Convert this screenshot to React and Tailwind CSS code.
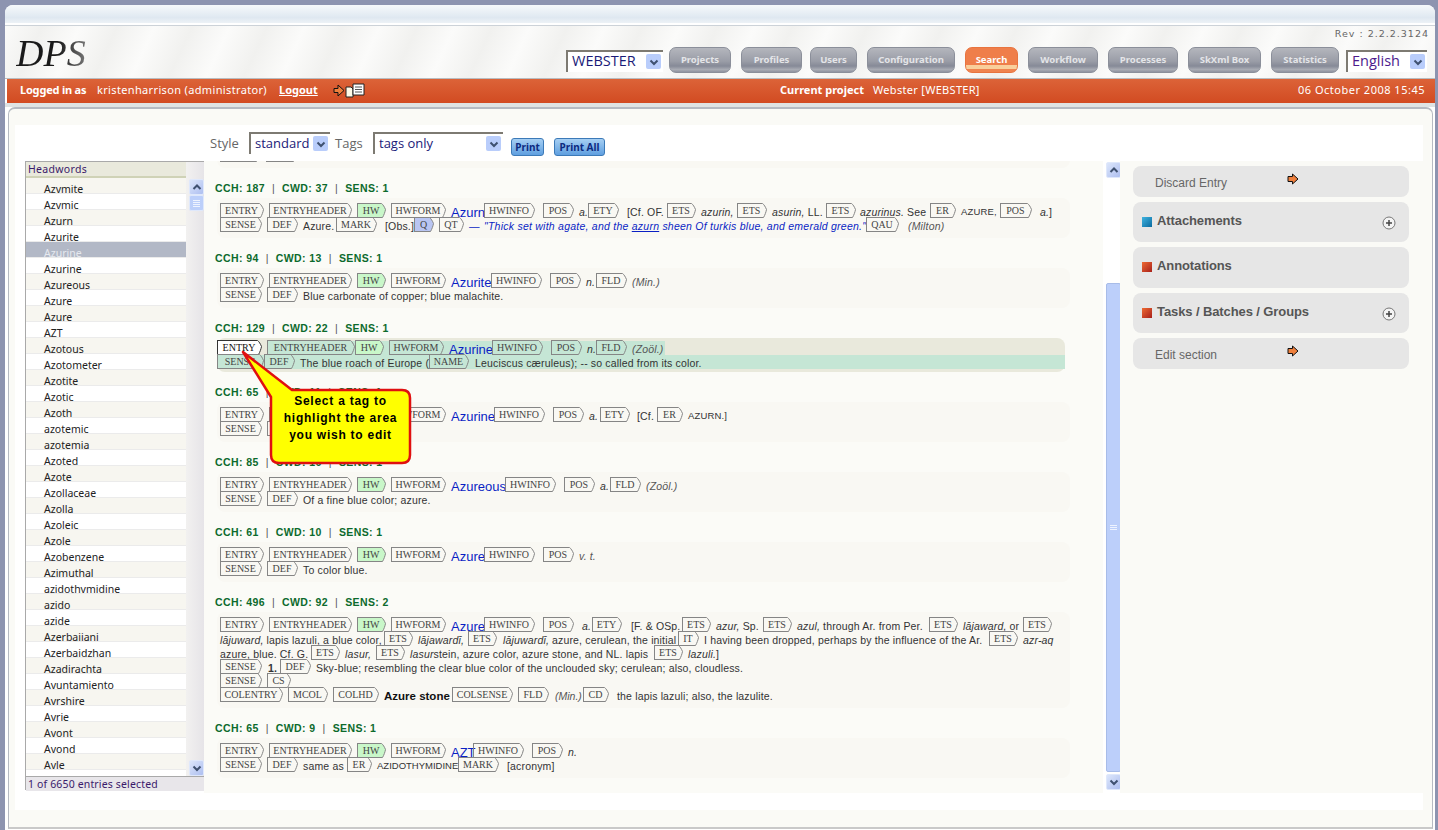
import React from "react";

const W = {
  ENTRY: "w-[44px]", ENTRYHEADER: "w-[83px]", HW: "w-[29px]", HWFORM: "w-[55px]", HWINFO: "w-[51px]", POS: "w-[31px]", ETY: "w-[31px]",
  SENSE: "w-[42px]", DEF: "w-[31px]", MARK: "w-[41px]", Q: "w-[20px]", QT: "w-[25px]", FLD: "w-[31px]", ETS: "w-[29px]", ER: "w-[26px]",
  QAU: "w-[33px]", IT: "w-[21px]", CS: "w-[24px]", COLENTRY: "w-[63px]", MCOL: "w-[40px]", COLHD: "w-[46px]", COLSENSE: "w-[61px]", CD: "w-[26px]", NAME: "w-[40px]",
};

function T({ n, c = "", w, bg = "", fill = "none", line = "#858585", text = "text-[#444]", bc = "border-[#858585]" }) {
  return (
    <span className={`-mt-[1px] flex h-[15px] flex-none ${w || W[n]} ${c}`}>
      <span className={`flex min-w-0 flex-1 items-center justify-center overflow-visible whitespace-nowrap border-y border-l pl-[4px] font-['Liberation_Serif',serif] text-[10px] leading-[12px] ${bc} ${bg} ${text}`}>{n}</span>
      <svg width="6" height="15" viewBox="0 0 6 15" className="flex-none">
        <path d="M0 .5H1.5C3 1.5 4.5 4 5.5 6.5 5 9 4 12 2.5 14.5H0Z" fill={fill} />
        <path d="M0 .5H1.5C3 1.5 4.5 4 5.5 6.5 5 9 4 12 2.5 14.5H0" fill="none" stroke={line} strokeWidth="1" />
      </svg>
    </span>
  );
}

function X({ c = "", children }) {
  return <span className={`mt-[1px] block h-[14px] flex-none whitespace-nowrap font-['Liberation_Sans',sans-serif] text-[10.5px] leading-[14px] tracking-[0.16px] text-[#333] ${c}`}>{children}</span>;
}

function HWord({ c, children }) {
  return <X c={`!mt-[2px] !text-[13px] !tracking-normal !text-[#0a1fc4] ${c}`}>{children}</X>;
}

function Row({ c = "", children }) {
  return <div className={`flex h-[14px] pl-[3px] ${c}`}>{children}</div>;
}

function Head() {
  return (
    <>
      <T n="ENTRY" />
      <T n="ENTRYHEADER" c="ml-[5px]" />
      <T n="HW" c="ml-[5px]" bg="bg-[#c9f7c9]" fill="#c9f7c9" />
      <T n="HWFORM" c="ml-[5px]" />
    </>
  );
}

function SenseDef() {
  return (
    <>
      <T n="SENSE" />
      <T n="DEF" c="ml-[5px]" />
    </>
  );
}

function Label({ a, b, s }) {
  return (
    <div className="ml-[11px] flex h-[17px] gap-[7px] font-['Liberation_Sans',sans-serif] text-[10.5px] font-bold leading-[14px] tracking-[0.4px] text-[#0c6a2c]">
      <span>CCH: {a}</span>
      <span className="font-normal text-[#555]">|</span>
      <span>CWD: {b}</span>
      <span className="font-normal text-[#555]">|</span>
      <span>SENS: {s}</span>
    </div>
  );
}

function Block({ c = "", children }) {
  return <div className={`mb-[13px] ml-[13px] w-[853px] flex-none rounded-lg bg-[#f9f8f3] py-[6px] ${c}`}>{children}</div>;
}

const WORDS = ["Azymite", "Azymic", "Azurn", "Azurite", "Azurine", "Azurine", "Azureous", "Azure", "Azure", "AZT", "Azotous", "Azotometer", "Azotite", "Azotic", "Azoth", "azotemic", "azotemia", "Azoted", "Azote", "Azollaceae", "Azolla", "Azoleic", "Azole", "Azobenzene", "Azimuthal", "azidothymidine", "azido", "azide", "Azerbaijani", "Azerbaidzhan", "Azadirachta", "Ayuntamiento", "Ayrshire", "Ayrie", "Ayont", "Ayond", "Ayle"];

const NAV = [
  ["Projects", "w-[62px] ml-[6px]"],
  ["Profiles", "w-[61px] ml-[10px]"],
  ["Users", "w-[47px] ml-[8px]"],
  ["Configuration", "w-[88px] ml-[10px]"],
  ["Search", "w-[53px] ml-[10px]", true],
  ["Workflow", "w-[70px] ml-[10px]"],
  ["Processes", "w-[70px] ml-[10px]"],
  ["SkXml Box", "w-[73px] ml-[10px]"],
  ["Statistics", "w-[68px] ml-[10px]"],
];

function Chevron({ up, size = 10 }) {
  return (
    <svg width={size} height={size} viewBox="0 0 10 10">
      <path d={up ? "M1.5 7 5 3.5 8.5 7" : "M1.5 3.5 5 7 8.5 3.5"} fill="none" stroke="#3f5170" strokeWidth="2" />
    </svg>
  );
}

function ScrollBtn({ up, c = "" }) {
  return (
    <div className={`flex h-[16px] w-[15px] flex-none items-center justify-center rounded-[2px] border border-[#dfe8fb] bg-[linear-gradient(135deg,#dce6fb,#aebff0)] ${c}`}>
      <Chevron up={up} />
    </div>
  );
}

function Sel({ label, c, txt = "", arrow = "ml-auto" }) {
  return (
    <div className={`flex flex-none items-center border-l-2 border-t-2 border-[#7d7a72] bg-white pb-[1px] pl-[4px] pr-[2px] font-['Open_Sans',sans-serif] text-[14.5px] leading-none text-[#1a1a78] ${c}`}>
      <span className={txt}>{label}</span>
      <span className={`flex h-[15px] w-[15px] flex-none items-center justify-center rounded-[2px] bg-[#b9cdfb] ${arrow}`}>
        <Chevron />
      </span>
    </div>
  );
}

function Arrow({ c = "" }) {
  return (
    <svg width="12" height="12" viewBox="0 0 12 12" className={c}>
      <path d="M1 3.5H5.5V1L11 6 5.5 11V8.5H1Z" fill="#ee7f3c" stroke="#111" strokeWidth="1" />
    </svg>
  );
}

function Square({ blue }) {
  return <span className={`block h-[10px] w-[10px] flex-none ${blue ? "bg-[linear-gradient(135deg,#3fb3e0,#0a6a9f)]" : "bg-[linear-gradient(135deg,#ee6a33,#a8201a)]"}`} />;
}

function Plus() {
  return (
    <svg width="14" height="14" viewBox="0 0 14 14">
      <circle cx="7" cy="7" r="6" fill="#f4f4f4" stroke="#777" />
      <path d="M7 4v6M4 7h6" stroke="#444" strokeWidth="1.5" />
    </svg>
  );
}

function PanelLink({ label, c = "" }) {
  return (
    <div className={`flex h-[31px] flex-none items-center rounded-lg bg-[#e6e6e6] pl-[22px] font-['Liberation_Sans',sans-serif] text-[12px] text-[#666] ${c}`}>
      <span className="w-[132px] pt-[3px]">{label}</span>
      <Arrow c="mb-[5px]" />
    </div>
  );
}

function PanelHead({ label, blue, plus, c = "" }) {
  return (
    <div className={`flex h-[40px] flex-none items-start rounded-lg bg-[#e6e6e6] pl-[9px] pr-[13px] pt-[11px] ${c}`}>
      <span className="mt-[4px] block flex-none"><Square blue={blue} /></span>
      <span className="ml-[5px] font-['Liberation_Sans',sans-serif] text-[13px] font-bold leading-[16px] tracking-[-0.1px] text-[#555]">{label}</span>
      {plus && <span className="ml-auto mt-[3px] block flex-none"><Plus /></span>}
    </div>
  );
}

export default function App() {
  return (
    <div className="relative h-[830px] w-[1438px] overflow-hidden bg-[#8d94b0] pl-[5px] pt-[5px]">
      <div className="h-[825px] w-[1430px] overflow-hidden rounded-t-lg bg-white">
        <div className="h-[18px] bg-[linear-gradient(#f6f9fb,#dfe8f1_70%,#edf2f6)]" />
        <div className="h-[3px] border-b border-[#ccd2d8]" />
        {/* header */}
        <div className="flex h-[53px] bg-[repeating-linear-gradient(115deg,#fbfbfa_0px,#f1f1ef_34px,#fbfbfa_68px)]">
          <div className="relative flex h-full w-full items-start border-b border-[#b9bcc0]">
            <div className="ml-[11px] mt-[9px] flex h-[36px] w-[550px] flex-none items-center">
              <span className="bg-[linear-gradient(90deg,#1a1a1a_60%,#777)] bg-clip-text font-['Liberation_Serif',serif] text-[38px] italic leading-none text-transparent">DPS</span>
            </div>
            <div className="mt-[24px] flex h-[22px] flex-none">
              <Sel label="WEBSTER" c="w-[97px] h-[22px]" />
            </div>
            <div className="mt-[21px] flex flex-none">
              {NAV.map(([n, c, on]) => (
                <div key={n} className={`flex h-[26px] flex-none items-center justify-center rounded-[7px] border font-['Noto_Sans',sans-serif] text-[9.5px] font-bold ${c} ${on ? "border-[#e8743f] bg-[linear-gradient(#ef7e4a_0%,#ef7e4a_72%,#f9cf9b_72%,#f9cf9b_88%,#ef8450_88%)] text-white" : "border-[#8b8f9a] bg-[linear-gradient(#b4b6bd,#9a9da7_55%,#868a97_75%,#a9acb4_90%,#8f93a0)] text-[#e4e5e8]"}`}>{n}</div>
              ))}
            </div>
            <div className="ml-[7px] mt-[24px] flex-none">
              <Sel label="English" c="w-[81px] h-[22px] !text-[#4c1a8c]" />
            </div>
            <div className="absolute right-[6px] top-[2px] font-['DejaVu_Sans',sans-serif] text-[9.5px] leading-[12px] tracking-[1px] text-[#666]">Rev : 2.2.2.3124</div>
          </div>
        </div>
        {/* orange bar */}
        <div className="ml-[2px] flex h-[24px] items-center bg-[linear-gradient(#dc6338,#d24b22)] pb-[1px] pr-[10px] font-['Noto_Sans',sans-serif] text-[11px] text-white">
          <span className="ml-[13px] w-[77px] flex-none font-bold tracking-[-0.2px]">Logged in as</span>
          <span className="w-[182px] flex-none tracking-[0.35px]">kristenharrison (administrator)</span>
          <span className="w-[54px] flex-none font-bold underline">Logout</span>
          <svg width="34" height="16" viewBox="0 0 34 16" className="flex-none">
            <path d="M1 5.5H5V2L11 7.5 5 13V9.5H1Z" fill="#ee7f3c" stroke="#111" />
            <path d="M13 4h5l2 2v8h-7Z" fill="#fffbe8" stroke="#222" />
            <path d="M20 1h11v11H20Z" fill="#fff" stroke="#222" />
            <path d="M22 4h7M22 6.5h7M22 9h7" stroke="#555" />
          </svg>
          <span className="ml-[413px] w-[93px] flex-none font-bold">Current project</span>
          <span className="flex-1 tracking-[0.3px]">Webster [WEBSTER]</span>
          <span className="flex-none tracking-[0.5px]">06 October 2008 15:45</span>
        </div>
        <div className="h-[4px] bg-[#dfe3e4]" />
        {/* content panel */}
        <div className="ml-[3px] h-[722px] w-[1425px] overflow-hidden rounded-t-[7px] border-x border-b-2 border-t-2 border-[#b6bac2] border-b-[#c9c9c9] bg-[#fafaf6] px-[6px] pt-[16px]">
          <div className="h-[685px] w-[1408px] bg-white">
            {/* toolbar */}
            <div className="flex h-[36px] pl-[195px] pt-[7px] font-['Open_Sans',sans-serif] text-[13px] text-[#666]">
              <span className="w-[39px] flex-none pt-[2px]">Style</span>
              <Sel label="standard" c="w-[81px] h-[22px] !text-[13px]" />
              <span className="ml-[5px] w-[38px] flex-none pt-[2px]">Tags</span>
              <Sel label="tags only" c="w-[130px] h-[22px] !text-[13px]" />
              <span className="ml-[8px] mt-[6px] flex h-[18px] w-[33px] flex-none items-center justify-center rounded-[3px] border border-[#3c7ab8] bg-[linear-gradient(#a6cff3,#5f9fe0)] font-['Noto_Sans',sans-serif] text-[10px] font-bold text-[#0d2a80]">Print</span>
              <span className="ml-[10px] mt-[6px] flex h-[18px] w-[51px] flex-none items-center justify-center rounded-[3px] border border-[#3c7ab8] bg-[linear-gradient(#a6cff3,#5f9fe0)] font-['Noto_Sans',sans-serif] text-[10px] font-bold text-[#0d2a80]">Print All</span>
            </div>
            <div className="flex h-[632px]">
              {/* Headwords list */}
              <div className="ml-[10px] flex h-[629px] w-[179px] flex-none flex-col border-l border-t border-[#a9a9a9] font-['Noto_Sans',sans-serif] text-[10.5px] text-[#222]">
                <div className="flex h-[614px] flex-none">
                  <div className="w-[160px] flex-none">
                    <div className="h-[16px] border-b-2 border-[#cfd2b6] bg-[#e9e9dc] pl-[2px] text-[10.5px] leading-[15px] tracking-[0.3px] text-[#3a1a6a]">Headwords</div>
                    {WORDS.map((w, i) => (
                      <div key={i} className={`h-[16px] overflow-hidden border-b border-[#ebebeb] pl-[18px] pt-[3px] leading-[16px] ${i === 4 ? "bg-[#b2b8c6] text-[#e6e9ef]" : i % 2 ? "bg-white" : "bg-[#f7f6f0]"}`}>{w}</div>
                    ))}
                  </div>
                  <div className="flex w-[18px] flex-none flex-col bg-[linear-gradient(90deg,#f2f1f0,#e6e4e8)] pl-[3px] pt-[17px]">
                    <ScrollBtn up />
                    <div className="flex h-[16px] w-[15px] flex-none flex-col items-center justify-center gap-[1px] rounded-[2px] border border-[#dfe8fb] bg-[#bccffa]">
                      <span className="h-px w-[7px] bg-[#eef3ff]" />
                      <span className="h-px w-[7px] bg-[#eef3ff]" />
                      <span className="h-px w-[7px] bg-[#eef3ff]" />
                      <span className="h-px w-[7px] bg-[#eef3ff]" />
                    </div>
                    <div className="flex-1" />
                    <ScrollBtn />
                  </div>
                </div>
                <div className="h-[15px] border-t border-[#a9a9a9] bg-[#e8e6ea] pl-[2px] text-[10.5px] leading-[14px] tracking-[0.15px] text-[#3a1a6a]">1 of 6650 entries selected</div>
              </div>
              {/* main */}
              <div className="flex h-[632px] w-[899px] flex-none flex-col overflow-hidden bg-[#fbfbf7]">
                <Block c="-mt-[33px]">
                  <Row />
                  <Row>
                    <T n="SENSE" w="w-[40px]" />
                    <T n="DEF" c="ml-[6px]" />
                    <X c="ml-[22px]">.</X>
                  </Row>
                </Block>

                <Label a="187" b="37" s="1" />
                <Block>
                  <Row>
                    <Head />
                    <HWord c="ml-[5px] w-[33px]">Azurn</HWord>
                    <T n="HWINFO" />
                    <T n="POS" c="ml-[8px]" />
                    <X c="ml-[5px] w-[9px] italic">a.</X>
                    <T n="ETY" />
                    <X c="ml-[8px] w-[40px]">[Cf. OF.</X>
                    <T n="ETS" />
                    <X c="ml-[5px] w-[36px] italic">azurin,</X>
                    <T n="ETS" w="w-[30px]" />
                    <X c="ml-[5px] w-[54px]"><i>asurin,</i> LL.</X>
                    <T n="ETS" w="w-[30px]" />
                    <X c="ml-[4px] w-[70px]"><i>azurinus.</i> See</X>
                    <T n="ER" />
                    <X c="ml-[5px] w-[39px] !text-[9.5px]">AZURE,</X>
                    <T n="POS" w="w-[32px]" />
                    <X c="ml-[8px] italic">a.<span className="not-italic">]</span></X>
                  </Row>
                  <Row>
                    <SenseDef />
                    <X c="ml-[5px] w-[33px]">Azure.</X>
                    <T n="MARK" />
                    <X c="ml-[8px] w-[29px]">[Obs.]</X>
                    <T n="Q" bg="bg-[#b9c5f2]" fill="#b9c5f2" />
                    <T n="QT" c="ml-[5px]" />
                    <X c="ml-[5px] w-[15px] !text-[#0a1fc4]">—</X>
                    <X c="w-[382px] italic !tracking-[0.24px] !text-[#0a1fc4]">"Thick set with agate, and the <span className="underline">azurn</span> sheen Of turkis blue, and emerald green."</X>
                    <T n="QAU" />
                    <X c="ml-[9px] italic !text-[#555]">(Milton)</X>
                  </Row>
                </Block>

                <Label a="94" b="13" s="1" />
                <Block>
                  <Row>
                    <Head />
                    <HWord c="ml-[5px] w-[40px]">Azurite</HWord>
                    <T n="HWINFO" />
                    <T n="POS" c="ml-[8px]" />
                    <X c="ml-[5px] w-[10px] italic">n.</X>
                    <T n="FLD" />
                    <X c="ml-[5px] italic !text-[#555]">(Min.)</X>
                  </Row>
                  <Row>
                    <SenseDef />
                    <X c="ml-[5px]">Blue carbonate of copper; blue malachite.</X>
                  </Row>
                </Block>

                <Label a="129" b="22" s="1" />
                <div className="mb-[13px] ml-[13px] w-[848px] flex-none rounded-lg bg-[#e9e9dc] py-[3px]">
                  <div className="flex h-[14px]">
                    <T n="ENTRY" w="w-[45px]" bg="bg-white" fill="#fff" text="text-[#111]" bc="border-[#333]" line="#333" />
                    <div className="ml-[5px] flex h-[14px] w-[398px] flex-none bg-[#c5e6d5]">
                      <T n="ENTRYHEADER" w="w-[88px]" />
                      <T n="HW" bg="bg-[#c9f7c9]" fill="#c9f7c9" />
                      <T n="HWFORM" c="ml-[5px]" />
                      <HWord c="ml-[5px] w-[43px]">Azurine</HWord>
                      <T n="HWINFO" />
                      <T n="POS" c="ml-[8px]" />
                      <X c="ml-[5px] w-[9px] italic">n.</X>
                      <T n="FLD" />
                      <X c="ml-[5px] italic !text-[#555]">(Zoöl.)</X>
                    </div>
                  </div>
                  <div className="flex h-[14px] bg-[#c5e6d5]">
                    <T n="SENSE" w="w-[47px]" />
                    <T n="DEF" />
                    <X c="ml-[5px] w-[129px]">The blue roach of Europe (</X>
                    <T n="NAME" />
                    <X c="ml-[6px]">Leuciscus cæruleus); -- so called from its color.</X>
                  </div>
                </div>

                <Label a="65" b="11" s="1" />
                <Block>
                  <Row>
                    <Head />
                    <HWord c="ml-[5px] w-[43px]">Azurine</HWord>
                    <T n="HWINFO" />
                    <T n="POS" c="ml-[8px]" />
                    <X c="ml-[5px] w-[11px] italic">a.</X>
                    <T n="ETY" w="w-[30px]" />
                    <X c="ml-[7px] w-[20px]">[Cf.</X>
                    <T n="ER" />
                    <X c="ml-[5px] !text-[9.5px]">AZURN.]</X>
                  </Row>
                  <Row>
                    <SenseDef />
                  </Row>
                </Block>

                <Label a="85" b="16" s="1" />
                <Block>
                  <Row>
                    <Head />
                    <HWord c="ml-[5px] w-[54px]">Azureous</HWord>
                    <T n="HWINFO" />
                    <T n="POS" c="ml-[8px]" />
                    <X c="ml-[5px] w-[10px] italic">a.</X>
                    <T n="FLD" w="w-[31px]" />
                    <X c="ml-[5px] italic !text-[#555]">(Zoöl.)</X>
                  </Row>
                  <Row>
                    <SenseDef />
                    <X c="ml-[5px]">Of a fine blue color; azure.</X>
                  </Row>
                </Block>

                <Label a="61" b="10" s="1" />
                <Block>
                  <Row>
                    <Head />
                    <HWord c="ml-[5px] w-[33px]">Azure</HWord>
                    <T n="HWINFO" />
                    <T n="POS" c="ml-[8px]" />
                    <X c="ml-[5px] italic !text-[#555]">v. t.</X>
                  </Row>
                  <Row>
                    <SenseDef />
                    <X c="ml-[5px]">To color blue.</X>
                  </Row>
                </Block>

                <Label a="496" b="92" s="2" />
                <Block>
                  <Row>
                    <Head />
                    <HWord c="ml-[5px] w-[33px]">Azure</HWord>
                    <T n="HWINFO" />
                    <T n="POS" c="ml-[8px]" />
                    <X c="ml-[8px] w-[10px] italic">a.</X>
                    <T n="ETY" w="w-[30px]" />
                    <X c="ml-[9px] w-[51px]">[F. &amp; OSp.</X>
                    <T n="ETS" />
                    <X c="ml-[5px] w-[47px]"><i>azur,</i> Sp.</X>
                    <T n="ETS" />
                    <X c="ml-[5px] w-[132px]"><i>azul,</i> through Ar. from Per.</X>
                    <T n="ETS" />
                    <X c="ml-[5px] w-[60px]"><i>lājaward,</i> or</X>
                    <T n="ETS" />
                  </Row>
                  <Row>
                    <X c="w-[164px]"><i>lājuward,</i> lapis lazuli, a blue color,</X>
                    <T n="ETS" />
                    <X c="ml-[5px] w-[50px] italic">lājawardī,</X>
                    <T n="ETS" />
                    <X c="ml-[6px] w-[175px]"><i>lājuwardī,</i> azure, cerulean, the initial</X>
                    <T n="IT" />
                    <X c="ml-[5px] w-[285px]">I having been dropped, perhaps by the influence of the Ar.</X>
                    <T n="ETS" />
                    <X c="ml-[5px] italic">azr-aq</X>
                  </Row>
                  <Row>
                    <X c="w-[91px]">azure, blue. Cf. G.</X>
                    <T n="ETS" />
                    <X c="ml-[5px] w-[31px] italic">lasur,</X>
                    <T n="ETS" />
                    <X c="ml-[5px] w-[244px]"><i>lasur</i>stein, azure color, azure stone, and NL. lapis</X>
                    <T n="ETS" />
                    <X c="ml-[5px] italic">lazuli.<span className="not-italic">]</span></X>
                  </Row>
                  <Row>
                    <T n="SENSE" />
                    <X c="ml-[6px] w-[12px] font-bold">1.</X>
                    <T n="DEF" />
                    <X c="ml-[5px]">Sky-blue; resembling the clear blue color of the unclouded sky; cerulean; also, cloudless.</X>
                  </Row>
                  <Row>
                    <T n="SENSE" />
                    <T n="CS" c="ml-[5px]" />
                  </Row>
                  <Row>
                    <T n="COLENTRY" />
                    <T n="MCOL" c="ml-[5px]" />
                    <T n="COLHD" c="ml-[5px]" />
                    <X c="ml-[5px] w-[68px] !text-[11.5px] font-bold !tracking-normal !text-[#111]">Azure stone</X>
                    <T n="COLSENSE" />
                    <T n="FLD" c="ml-[5px]" />
                    <X c="ml-[6px] w-[28px] italic !tracking-normal !text-[#555]">(Min.)</X>
                    <T n="CD" />
                    <X c="ml-[8px]">the lapis lazuli; also, the lazulite.</X>
                  </Row>
                </Block>

                <Label a="65" b="9" s="1" />
                <Block>
                  <Row>
                    <Head />
                    <HWord c="ml-[5px] w-[22px]">AZT</HWord>
                    <T n="HWINFO" />
                    <T n="POS" c="ml-[8px]" />
                    <X c="ml-[5px] italic">n.</X>
                  </Row>
                  <Row>
                    <SenseDef />
                    <X c="ml-[5px] w-[44px]">same as</X>
                    <T n="ER" w="w-[25px]" />
                    <X c="ml-[5px] w-[81px] !text-[9.5px] !tracking-normal">AZIDOTHYMIDINE</X>
                    <T n="MARK" />
                    <X c="ml-[8px]">[acronym]</X>
                  </Row>
                </Block>
              </div>
              {/* main scrollbar */}
              <div className="flex h-[629px] w-[17px] flex-none flex-col bg-white pl-[3px] pt-[1px]">
                <ScrollBtn up />
                <div className="h-[105px] flex-none" />
                <div className="flex h-[489px] w-[15px] flex-none flex-col items-center justify-center gap-[1px] rounded-[2px] border border-[#a8bce8] bg-[#bccffa]">
                  <span className="h-px w-[7px] bg-[#eef3ff]" />
                  <span className="h-px w-[7px] bg-[#eef3ff]" />
                  <span className="h-px w-[7px] bg-[#eef3ff]" />
                </div>
                <ScrollBtn c="mt-[2px]" />
              </div>
              {/* right panel */}
              <div className="flex h-[632px] w-[303px] flex-none flex-col bg-[#fafaf6] pl-[13px] pr-[14px] pt-[5px]">
                <PanelLink label="Discard Entry" />
                <PanelHead label="Attachements" blue plus c="mt-[5px]" />
                <PanelHead label="Annotations" c="mt-[5px] !h-[41px]" />
                <PanelHead label="Tasks / Batches / Groups" plus c="mt-[5px]" />
                <PanelLink label="Edit section" c="mt-[5px]" />
              </div>
            </div>
          </div>
        </div>
      </div>

      {/* callout */}
      <svg width="180" height="125" viewBox="0 0 180 125" className="absolute left-[240px] top-[350px]">
        <path d="M3 2 52 40H162Q170 40 170 48V105Q170 113 162 113H39Q31 113 31 105V47Z" fill="#ffff00" stroke="#e01010" strokeWidth="2.5" strokeLinejoin="round" />
      </svg>
      <div className="absolute left-[271px] top-[393px] w-[139px] text-center font-['Liberation_Sans',sans-serif] text-[12px] font-bold leading-[17px] tracking-[0.75px] text-black">
        Select a tag to<br />highlight the area<br />you wish to edit
      </div>
    </div>
  );
}
